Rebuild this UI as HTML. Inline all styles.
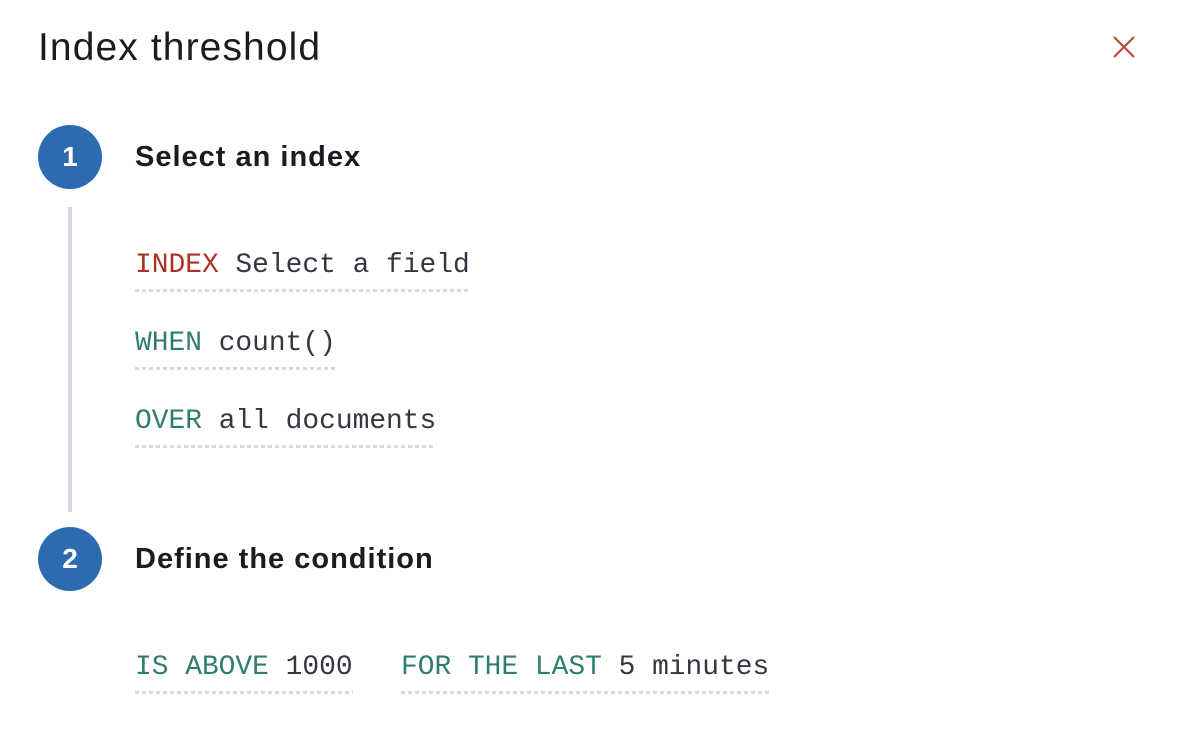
<!DOCTYPE html>
<html><head><meta charset="utf-8"><style>
html,body{margin:0;padding:0;background:#fff;width:1184px;height:742px;overflow:hidden;position:relative;font-family:"Liberation Sans",sans-serif;}
.a{position:absolute;white-space:nowrap;}
.title{left:38px;top:24px;font-size:39px;color:#1a1c21;line-height:48px;letter-spacing:1.1px;}
.circ{width:64px;height:64px;border-radius:50%;background:#2d6bb1;color:#fff;font-weight:bold;font-size:28px;line-height:64px;text-align:center;left:38px;}
.h{left:135px;font-weight:bold;font-size:29px;color:#1a1c21;line-height:40px;letter-spacing:1px;}
.line{left:68px;top:207px;width:4px;height:305px;background:#d3dae6;}
.m{font-family:"Liberation Mono",monospace;font-size:27.9px;line-height:34px;color:#343741;}
.m::after{content:"";position:absolute;left:0;right:0;top:40px;height:3px;background:repeating-linear-gradient(90deg,#d3dae6 0 4px,transparent 4px 7px);}
.r{color:#ac3127;}
.g{color:#2f7d70;}
</style></head><body>
<div class="a title">Index threshold</div>
<svg class="a" style="left:1112px;top:35px" width="24" height="24" viewBox="0 0 24 24"><path d="M2 2L22 22M22 2L2 22" stroke="#bd4a3e" stroke-width="2.2" fill="none"/></svg>
<div class="a circ" style="top:125px">1</div>
<div class="a h" style="top:137px">Select an index</div>
<div class="a line"></div>
<div class="a m" style="left:135px;top:249px"><span class="r">INDEX</span> Select a field</div>
<div class="a m" style="left:135px;top:327px"><span class="g">WHEN</span> count()</div>
<div class="a m" style="left:135px;top:405px"><span class="g">OVER</span> all documents</div>
<div class="a circ" style="top:527px">2</div>
<div class="a h" style="top:539px">Define the condition</div>
<div class="a m" style="left:135px;top:651px"><span class="g">IS ABOVE</span> 1000</div>
<div class="a m" style="left:401px;top:651px"><span class="g">FOR THE LAST</span> 5 minutes</div>
</body></html>
